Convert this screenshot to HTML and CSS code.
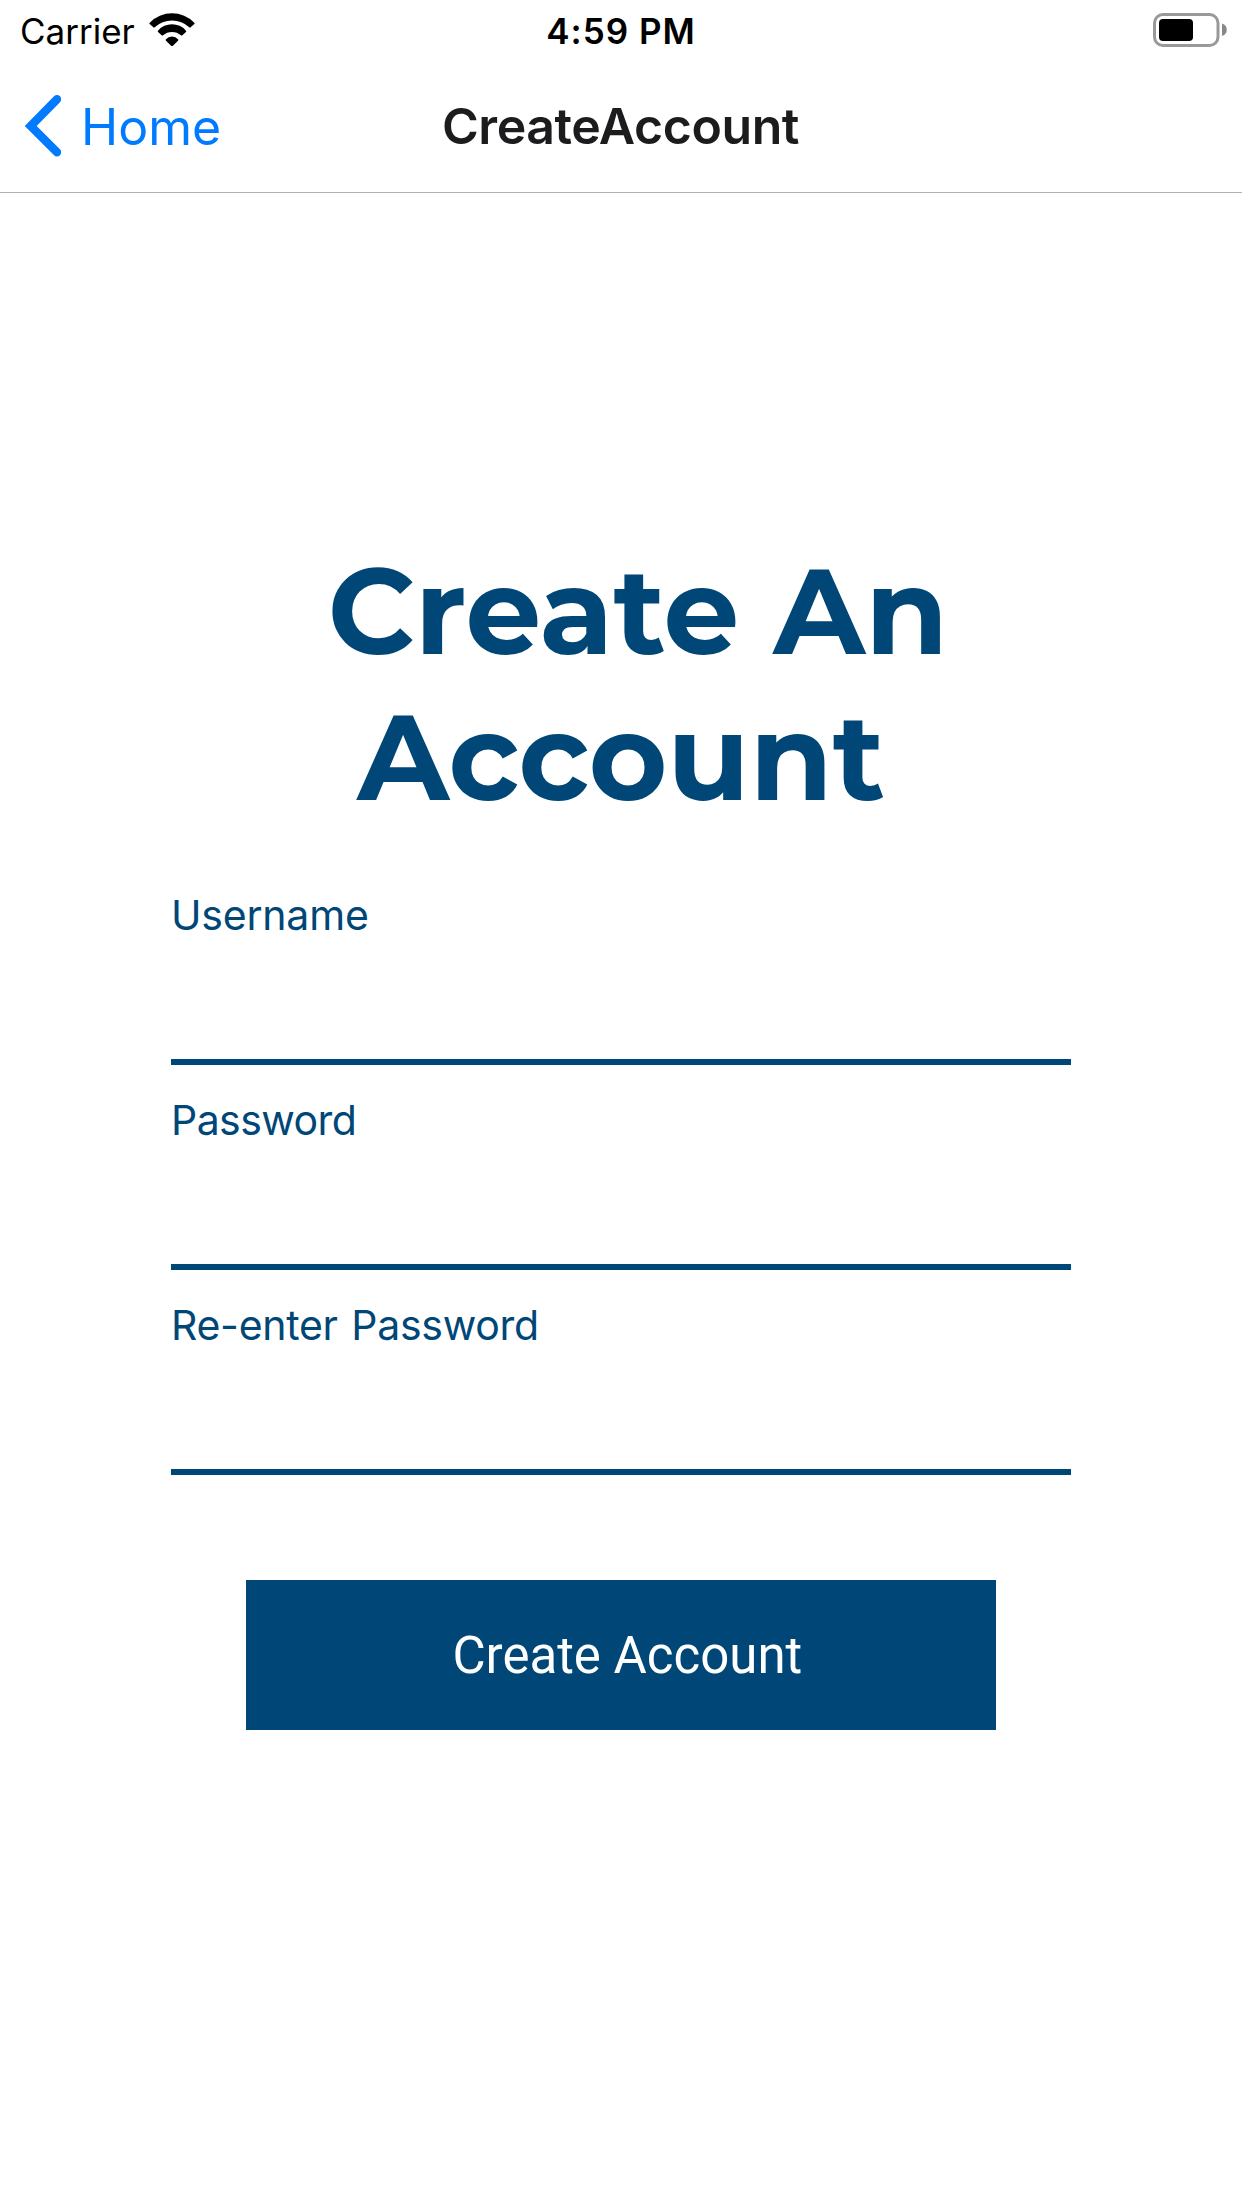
FILE: index.html
```
<!DOCTYPE html>
<html lang="en">
<head>
  <meta charset="utf-8">
  <title>CreateAccount</title>
  <link rel="stylesheet" href="styles.css">
</head>
<body>
  <div class="status-bar">
    <div class="carrier">
      <span>Carrier</span>
      <svg class="wifi" viewBox="447 38 138 100" aria-hidden="true">
        <path d="M449 67 Q447 69 449 71 L460 81 Q462 83 464 81 A76 76 0 0 1 568 81 Q570 83 572 81 L583 71 Q585 69 583 67 A94 94 0 0 0 449 67Z"/>
        <path d="M474 91 Q472 93 474 95 L485 105 Q487 107 489 105 A41 41 0 0 1 543 105 Q545 107 547 105 L558 95 Q560 93 558 91 A55 55 0 0 0 474 91Z"/>
        <path d="M498 117 Q496 119 498 121 L514 137 Q516 139 518 137 L534 121 Q536 119 534 117 A23 23 0 0 0 498 117Z"/>
      </svg>
    </div>
    <time class="clock">4:59 PM</time>
    <svg class="battery" viewBox="0 0 74 34" aria-hidden="true">
      <rect class="battery-shell" x="1.5" y="1.5" width="63.5" height="31" rx="8.5"/>
      <rect x="6" y="6" width="34" height="22" rx="4"/>
      <path class="battery-cap" d="M69 10.5 A6.5 6.5 0 0 1 69 23Z"/>
    </svg>
  </div>

  <header class="nav-bar">
    <a class="back" href="#">
      <svg class="chevron" viewBox="0 0 36 62" aria-hidden="true"><path d="M32 4.2 L5.7 31 L32 57.3"/></svg>
      <span>Home</span>
    </a>
    <h1 class="nav-title">CreateAccount</h1>
  </header>

  <main class="content">
    <h2 class="heading">&nbsp;Create An<br>Account</h2>
    <form class="form">
      <label class="field username">Username<input class="input" type="text"></label>
      <label class="field password">Password<input class="input" type="password"></label>
      <label class="field repeat">Re-enter Password<input class="input" type="password"></label>
      <button class="submit" type="button">&nbsp;Create Account</button>
    </form>
  </main>
</body>
</html>
```
FILE: styles.css
```
* {
  box-sizing: border-box;
}

body {
  margin: 0;
  min-height: 2208px;
  background: #fff;
  font-family: Inter, "Liberation Sans", sans-serif;
}

.status-bar {
  display: grid;
  grid-template-columns: 1fr auto 1fr;
  align-items: center;
  height: 60px;
  padding: 2px 15px 0 20px;
  font-size: 35px;
  line-height: 58px;
}

.carrier {
  display: flex;
  align-items: center;
  gap: 14px;
}

.wifi {
  width: 46px;
  height: 33.3px;
  margin-top: -3px;
}

.clock {
  font-weight: 600;
  letter-spacing: 1px;
  margin-right: 5px;
}

.battery {
  justify-self: end;
  width: 74px;
  height: 34px;
  margin-top: -2px;
}

.battery-shell {
  fill: none;
  stroke: #999;
  stroke-width: 3;
}

.battery-cap {
  fill: #888;
}

.nav-bar {
  display: grid;
  grid-template-columns: 1fr auto 1fr;
  align-items: center;
  height: 133px;
  border-bottom: 1px solid #b2b2b2;
  font-size: 50px;
  line-height: 60px;
}

.back {
  display: flex;
  align-items: center;
  padding: 1px 0 0 25px;
  gap: 20px;
  color: #007aff;
  text-decoration: none;
}

.chevron {
  width: 36px;
  height: 62px;
  margin-top: -2px;
  fill: none;
  stroke: currentColor;
  stroke-width: 8.4;
  stroke-linecap: round;
  stroke-linejoin: miter;
}

.nav-title {
  margin: 0 1px 0 0;
  color: #1c1c1e;
  font-size: 50px;
  font-weight: 600;
  letter-spacing: -0.42px;
}

.content {
  width: 900px;
  margin: 0 auto;
  padding-top: 345px;
  color: #004777;
}

.heading {
  margin: 0 0 60px;
  font: 700 120px/146px Montserrat, Inter, sans-serif;
  text-align: center;
}

.form {
  display: flex;
  flex-direction: column;
}

.field {
  display: flex;
  flex-direction: column;
  height: 175px;
  margin-bottom: 30px;
  font-size: 41px;
  line-height: 50px;
}

.username {
  letter-spacing: -0.2px;
}

.password {
  letter-spacing: -0.55px;
}

.repeat {
  letter-spacing: -0.3px;
  word-spacing: 2.5px;
}

.input {
  flex: 1;
  width: 100%;
  padding: 0;
  border: 0;
  border-bottom: 6px solid #004777;
  background: transparent;
  color: inherit;
  font: inherit;
  outline: 0;
}

.submit {
  width: 750px;
  height: 150px;
  margin: 75px auto 0;
  padding: 2px 0 0;
  border: 0;
  background: #004777;
  color: #fff;
  font: 400 51px/60px Roboto, sans-serif;
}
```
